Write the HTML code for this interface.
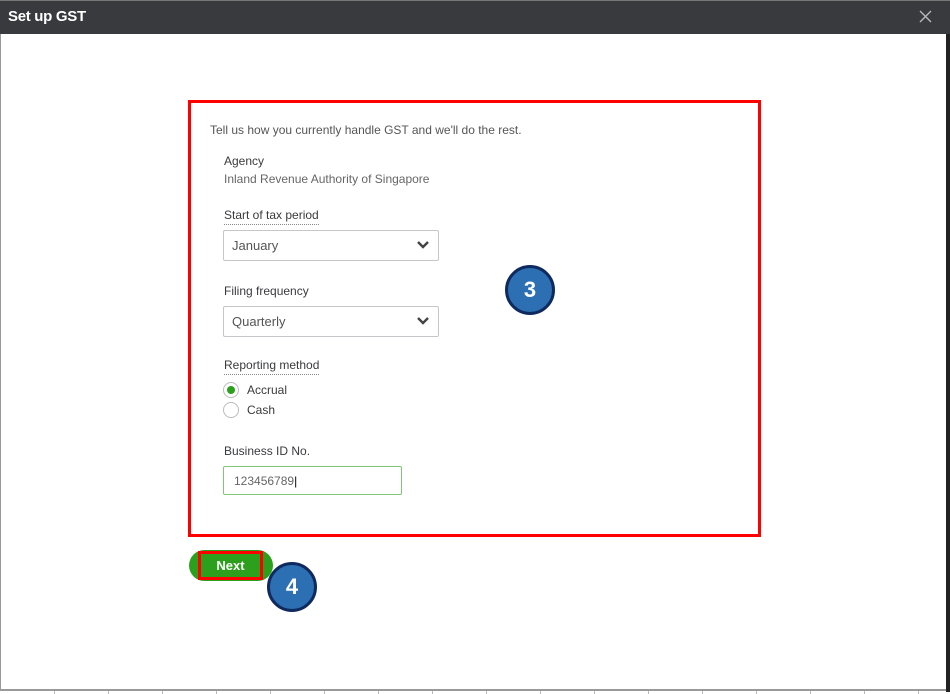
<!DOCTYPE html>
<html><head><style>
*{margin:0;padding:0;box-sizing:border-box}
body{width:950px;height:694px;background:#fff;position:relative;overflow:hidden;font-family:"Liberation Sans",sans-serif;color:#393a3d}
.a{position:absolute}
.hdr{left:0;top:0;width:950px;height:34px;background:#393a3e;border-top:1px solid #777}
.t{left:8px;top:8px;color:#fff;font-weight:bold;font-size:15px;letter-spacing:-0.3px}
.lbl{font-size:12px;color:#393a3d}
.dot{border-bottom:1px dotted #888;padding-bottom:2px}
.sel{width:216px;height:31px;border:1px solid #c4c6c9;border-radius:2px;font-size:13px;color:#555;padding:7px 8px}
.chev{right:8px;top:9px}
.rad{width:16px;height:16px;border:1px solid #bbb;border-radius:50%}
.circ{width:50px;height:50px;border-radius:50%;background:#2c6fb2;border:3px solid #0f2a5e;color:#fff;font-weight:bold;font-size:22px;text-align:center;line-height:44px}
.tk{top:691px;width:1px;height:3px;background:#bbb}
</style></head><body>
<div class="a hdr"></div>
<div class="a t">Set up GST</div>
<svg class="a" style="left:919px;top:10px" width="13" height="13" viewBox="0 0 13 13"><path d="M1 1l11 11M12 1L1 12" stroke="#bbb" stroke-width="1.3"/></svg>
<div class="a" style="left:0;top:34px;width:1px;height:656px;background:#999"></div>
<div class="a" style="left:946px;top:34px;width:4px;height:658px;background:#222"></div>
<div class="a" style="left:0;top:689px;width:946px;height:2px;background:#999"></div>
<div class="a tk" style="left:54px"></div><div class="a tk" style="left:108px"></div><div class="a tk" style="left:162px"></div><div class="a tk" style="left:216px"></div><div class="a tk" style="left:270px"></div><div class="a tk" style="left:324px"></div><div class="a tk" style="left:378px"></div><div class="a tk" style="left:432px"></div><div class="a tk" style="left:486px"></div><div class="a tk" style="left:540px"></div><div class="a tk" style="left:594px"></div><div class="a tk" style="left:648px"></div><div class="a tk" style="left:702px"></div><div class="a tk" style="left:756px"></div><div class="a tk" style="left:810px"></div><div class="a tk" style="left:864px"></div><div class="a tk" style="left:918px"></div>
<div class="a" style="left:188px;top:100px;width:573px;height:437px;border:3px solid #f00"></div>
<div class="a lbl" style="left:210px;top:123px;font-size:12px;color:#555">Tell us how you currently handle GST and we'll do the rest.</div>
<div class="a lbl" style="left:224px;top:154px">Agency</div>
<div class="a lbl" style="left:224px;top:172px;color:#666">Inland Revenue Authority of Singapore</div>
<div class="a lbl dot" style="left:224px;top:208px">Start of tax period</div>
<div class="a sel" style="left:223px;top:230px">January<svg class="a chev" width="14" height="10" viewBox="0 0 14 10"><path d="M2 2l5 5 5-5" stroke="#444" stroke-width="2.4" fill="none"/></svg></div>
<div class="a lbl" style="left:224px;top:284px">Filing frequency</div>
<div class="a sel" style="left:223px;top:306px">Quarterly<svg class="a chev" width="14" height="10" viewBox="0 0 14 10"><path d="M2 2l5 5 5-5" stroke="#444" stroke-width="2.4" fill="none"/></svg></div>
<div class="a lbl dot" style="left:224px;top:358px">Reporting method</div>
<div class="a rad" style="left:223px;top:382px"><div class="a" style="left:3px;top:3px;width:8px;height:8px;border-radius:50%;background:#2ca01c"></div></div>
<div class="a lbl" style="left:247px;top:383px">Accrual</div>
<div class="a rad" style="left:223px;top:402px"></div>
<div class="a lbl" style="left:247px;top:403px">Cash</div>
<div class="a lbl" style="left:224px;top:444px">Business ID No.</div>
<div class="a" style="left:223px;top:466px;width:179px;height:29px;border:1px solid #7fc873;border-radius:2px;font-size:12px;color:#666;padding:7px 10px">123456789<span style="color:#000">|</span></div>
<div class="a" style="left:189px;top:550px;width:84px;height:31px;border-radius:16px;background:#2ca01c"></div>
<div class="a" style="left:198px;top:551px;width:65px;height:29px;border:3px solid #f00;color:#fff;font-weight:bold;font-size:13px;text-align:center;line-height:23px">Next</div>
<div class="a circ" style="left:505px;top:265px">3</div>
<div class="a circ" style="left:267px;top:562px">4</div>
</body></html>
